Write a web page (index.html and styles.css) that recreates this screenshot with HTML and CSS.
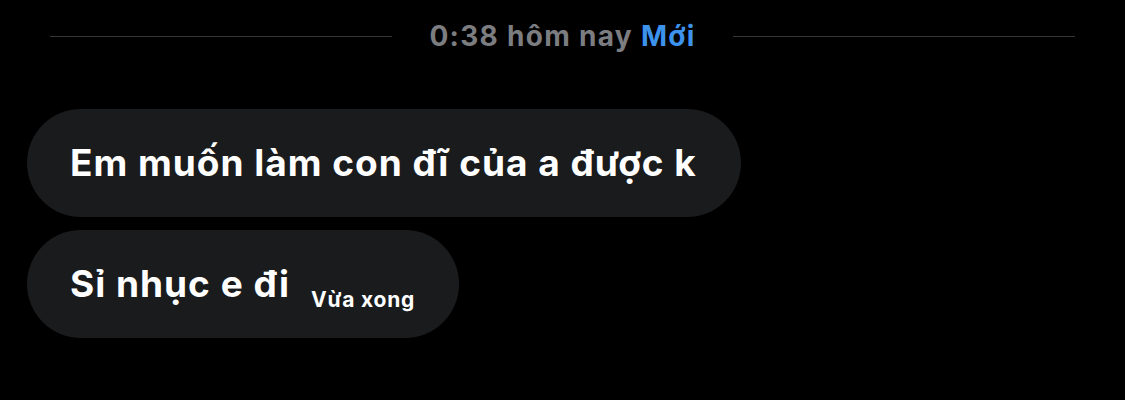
FILE: index.html
```html
<!DOCTYPE html>
<html lang="vi">
<head>
<meta charset="utf-8">
<link rel="stylesheet" href="styles.css">
</head>
<body>
<div class="chat">
  <div class="divider">
    <span class="rule"></span>
    <span class="stamp">0:38 hôm nay <span class="new">Mới</span></span>
    <span class="rule"></span>
  </div>
  <div class="messages">
    <div class="bubble"><span class="text">Em muốn làm con đĩ của a được k</span></div>
    <div class="bubble"><span class="text">Sỉ nhục e đi</span><span class="time">Vừa xong</span></div>
  </div>
</div>
</body>
</html>
```

FILE: styles.css
```css
html, body {
  margin: 0;
  padding: 0;
  background: #000;
}
body {
  font-family: Inter, "Noto Sans", sans-serif;
  color: #fff;
  width: 1125px;
  height: 400px;
  overflow: hidden;
}
.chat {
  display: flex;
  flex-direction: column;
}
.divider {
  display: flex;
  align-items: center;
  height: 72px;
  padding: 0 50px;
  gap: 37px;
}
.rule {
  flex: 1;
  height: 1px;
  background: #363638;
}
.stamp {
  font-size: 28px;
  font-weight: 700;
  color: #7c7d81;
  letter-spacing: 1.3px;
}
.new {
  color: #3d93ec;
}
.messages {
  display: flex;
  flex-direction: column;
  align-items: flex-start;
  gap: 13px;
  padding: 37px 0 0 27px;
}
.bubble {
  display: flex;
  align-items: baseline;
  height: 108px;
  box-sizing: border-box;
  padding: 0 44px 0 43px;
  border-radius: 54px;
  background: #1a1b1d;
  line-height: 108px;
}
.text {
  font-size: 37px;
  font-weight: 700;
  letter-spacing: 1px;
}
.time {
  font-size: 21px;
  font-weight: 700;
  letter-spacing: 0.8px;
  margin-left: 21px;
  position: relative;
  top: 10px;
}
```
